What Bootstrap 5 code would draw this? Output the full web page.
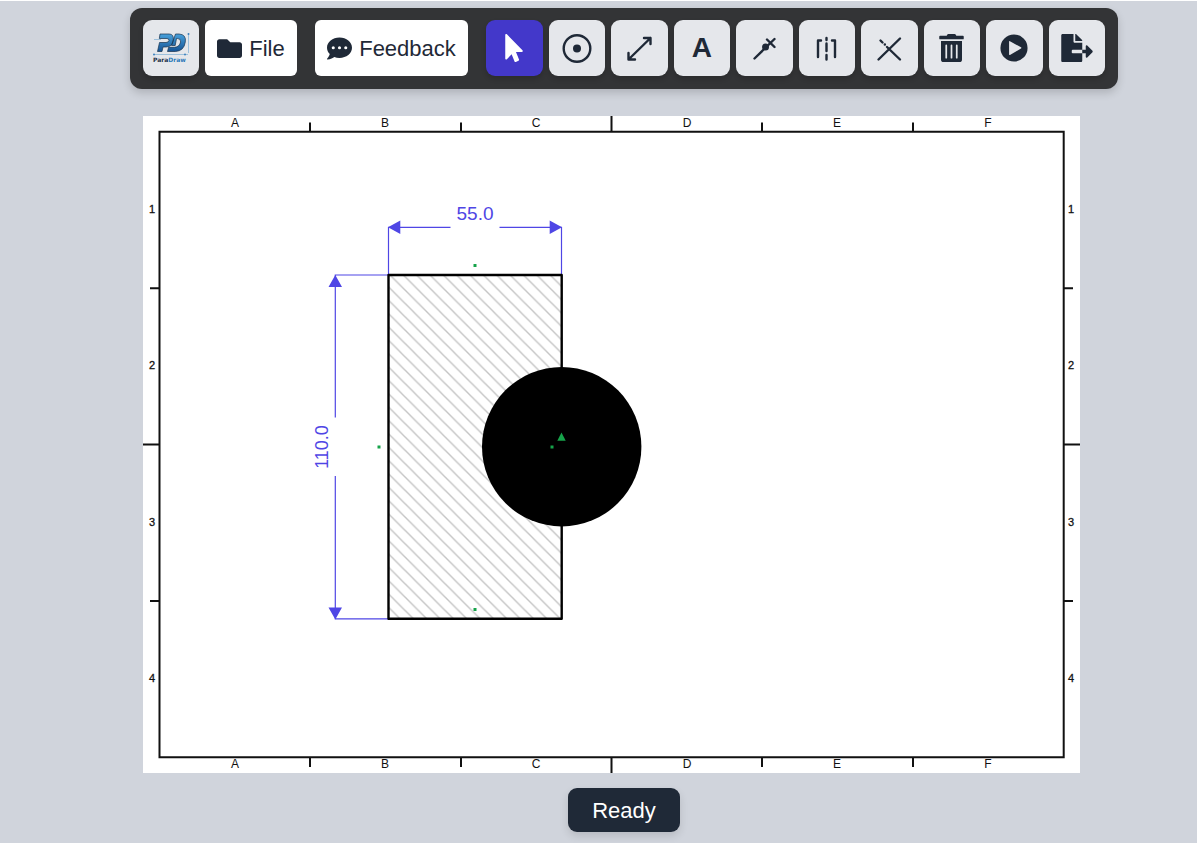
<!DOCTYPE html>
<html lang="en">
<head>
<meta charset="utf-8">
<meta name="viewport" content="width=device-width, initial-scale=1">
<title>ParaDraw</title>
<link href="https://cdn.jsdelivr.net/npm/bootstrap@5.3.0/dist/css/bootstrap.min.css" rel="stylesheet">
<style>
  body { background: #d0d4dc; font-family: "Liberation Sans", Arial, sans-serif; font-size: 22px; color: #1f2937; border-top: 1px solid #fff; }
  .workspace { padding: 7px 0 0 51px; min-height: calc(100vh - 1px); }
  .toolbar { width: 988px; max-width: 100%; background: #333436; border-radius: 12px; padding: 12px 13px 13px; gap: 18px; box-shadow: 0 4px 8px rgba(0,0,0,.16); }
  .toolset { gap: 6px; }
  .toolbar .btn { height: 56px; padding: 0; color: #1f2937; border: 0; }
  .toolbar .tool { flex: 1 1 0; min-width: 0; background: #e5e7eb; border-radius: 9px; box-shadow: 0 3px 5px rgba(0,0,0,.16); }
  .toolbar .logo { flex: 0 0 56px; }
  .toolbar .tool.active { background: #4338ca; color: #fff; }
  .toolbar .menu { background: #fff; border-radius: 6px; font-size: 22px; gap: 7px; }
  .menu-file { width: 92px; }
  .menu-feedback { width: 153px; }
  .tool-letter { font-size: 28px; font-weight: 700; line-height: 56px; }
  .glyph { fill: currentColor; display: block; flex: none; }
  .stroke { fill: none; stroke: currentColor; stroke-width: 2.400; stroke-linecap: round; stroke-linejoin: round; display: block; flex: none; }
  .sheet-area { padding: 27px 117px 15px 92px; }
  .sheet { display: block; width: 100%; height: auto; background: #fff; }
  .sheet text { font-size: 12px; text-anchor: middle; fill: #111; }
  .sheet .row-mark text { font-size: 11px; stroke: #111; stroke-width: .3; }
  .sheet .dim-text { font-size: 19px; fill: #4f46e5; }
  .sheet .dim-side { font-size: 18px; }
  .status { background: #1f2937; color: #fff; border-radius: 9px; padding: 1px 24px 0; line-height: 43px; box-shadow: 0 4px 8px rgba(0,0,0,.12); }
</style>
</head>
<body>
<main class="workspace d-flex flex-column align-items-center">
  <nav class="toolbar d-flex" aria-label="Tools">
    <div class="toolset d-flex">
      <button type="button" class="btn tool logo d-flex align-items-center justify-content-center" aria-label="ParaDraw">
        <svg width="56" height="56" viewBox="0 0 56 56">
          <defs><linearGradient id="blue" x1="0" y1="0" x2="0" y2="1"><stop offset="0" stop-color="#49a2dc"/><stop offset="1" stop-color="#155394"/></linearGradient></defs>
          <g stroke="#6ca6d0" stroke-width="1" fill="none"><path d="M11 34.500H45M45.500 13V33M11 19.500H18" opacity=".6"/></g>
          <g fill="#3f82bd"><circle cx="11" cy="34.500" r="1"/><circle cx="42" cy="34.500" r="1"/><circle cx="45.500" cy="14" r="1"/></g>
          <path fill-rule="evenodd" fill="url(#blue)" stroke="#17324e" stroke-width=".7" d="M17 14H26Q31 14 30.300 20Q29.500 27 23 27H20L19 31.500H14.500L16.500 22.500H23Q25.500 22.500 26 20.500Q26 18.500 24 18.500H16.300ZM32.500 14H36Q43.500 14.500 42.300 22Q41 31 32.500 31.500H24.500L25.600 27.300H31.500Q36.500 27 37.600 22Q38 18.500 34.500 18.500H33.500L32.200 25.500H28.500Z"/>
          <text x="10" y="42" font-family="DejaVu Sans" font-size="6" font-weight="700" fill="#1b2e45">Para<tspan fill="#2878b8">Draw</tspan></text>
        </svg>
      </button>
      <button type="button" class="btn menu menu-file d-flex align-items-center justify-content-center">
        <svg class="glyph" width="25" height="25" viewBox="0 0 512 512"><path d="M464 128H272l-64-64H48C21.490 64 0 85.490 0 112v288c0 26.510 21.490 48 48 48h416c26.510 0 48-21.490 48-48V176c0-26.510-21.490-48-48-48z"/></svg>
        <span>File</span>
      </button>
    </div>
    <button type="button" class="btn menu menu-feedback d-flex align-items-center justify-content-center">
      <svg class="glyph" width="25" height="25" viewBox="0 0 512 512"><path fill-rule="evenodd" d="M256 32C114.600 32 0 125.100 0 240c0 49.600 21.400 95 57 130.700C44.500 421.100 2.700 466 2.200 466.500c-2.200 2.300-2.800 5.700-1.500 8.700S4.800 480 8 480c66.300 0 116-31.800 140.600-51.400 32.700 12.300 69 19.400 107.400 19.400 141.400 0 256-93.100 256-208S397.400 32 256 32zM128 272a32 32 0 1 1 0-64 32 32 0 0 1 0 64zm128 0a32 32 0 1 1 0-64 32 32 0 0 1 0 64zm128 0a32 32 0 1 1 0-64 32 32 0 0 1 0 64z"/></svg>
      <span>Feedback</span>
    </button>
    <div class="toolset d-flex flex-grow-1">
      <button type="button" class="btn tool active d-flex align-items-center justify-content-center" aria-label="Select">
        <svg class="glyph" width="18" height="28" viewBox="0 0 320 512"><path d="M302.189 329.126H196.105l55.831 135.993c3.889 9.428-.555 19.999-9.444 23.999l-49.165 21.427c-9.165 4-19.443-.571-23.332-9.714l-53.053-129.136-86.664 89.138C18.729 472.710 0 463.554 0 447.977V18.299C0 1.899 19.921-6.096 30.277 5.443l284.412 292.542c11.472 11.179 3.007 31.141-12.500 31.141z"/></svg>
      </button>
      <button type="button" class="btn tool d-flex align-items-center justify-content-center" aria-label="Circle">
        <svg class="stroke" width="56" height="56" viewBox="0 0 56 56"><circle cx="28" cy="28.500" r="13.300"/><circle cx="28" cy="28.500" r="4" fill="currentColor" stroke="none"/></svg>
      </button>
      <button type="button" class="btn tool d-flex align-items-center justify-content-center" aria-label="Dimension">
        <svg class="stroke" width="56" height="56" viewBox="0 0 56 56"><path d="M17.500 39.500 39.500 18M33 18H39.500V24M17.500 33V39.500H24"/></svg>
      </button>
      <button type="button" class="btn tool" aria-label="Text"><span class="tool-letter">A</span></button>
      <button type="button" class="btn tool d-flex align-items-center justify-content-center" aria-label="Extend">
        <svg class="stroke" width="56" height="56" viewBox="0 0 56 56"><path d="M18.500 38.500 38.500 19M31 19.500 38.500 27"/><circle cx="29.500" cy="27" r="3.500" fill="currentColor" stroke="none"/></svg>
      </button>
      <button type="button" class="btn tool d-flex align-items-center justify-content-center" aria-label="Mirror">
        <svg class="stroke" width="56" height="56" viewBox="0 0 56 56"><path d="M22 20.500H19V37M33 20.500H36V37M27.500 18V20M27.500 23.500V31M27.500 35V39.500"/></svg>
      </button>
      <button type="button" class="btn tool d-flex align-items-center justify-content-center" aria-label="Trim">
        <svg class="stroke" width="56" height="56" viewBox="0 0 56 56"><path d="M17.500 39.500 39 18.500M19.500 20.500 21.500 22.500M23.800 24.500H23.900M26 27 39 39.500"/></svg>
      </button>
      <button type="button" class="btn tool d-flex align-items-center justify-content-center" aria-label="Delete">
        <svg class="glyph" width="25" height="28" viewBox="0 0 448 512"><path fill-rule="evenodd" d="M32 464a48 48 0 0 0 48 48h288a48 48 0 0 0 48-48V128H32zm272-256a16 16 0 0 1 32 0v224a16 16 0 0 1-32 0zm-96 0a16 16 0 0 1 32 0v224a16 16 0 0 1-32 0zm-96 0a16 16 0 0 1 32 0v224a16 16 0 0 1-32 0zM432 32H312l-9.400-18.700A24 24 0 0 0 281.100 0H166.800a23.720 23.720 0 0 0-21.400 13.300L136 32H16A16 16 0 0 0 0 48v32a16 16 0 0 0 16 16h416a16 16 0 0 0 16-16V48a16 16 0 0 0-16-16z"/></svg>
      </button>
      <button type="button" class="btn tool d-flex align-items-center justify-content-center" aria-label="Play">
        <svg class="glyph" width="28" height="28" viewBox="0 0 512 512"><path fill-rule="evenodd" d="M256 8a248 248 0 1 0 0 496 248 248 0 0 0 0-496zM166 142Q166 124 182 132L384 243Q398 254 384 266L182 382Q166 390 166 372Z"/></svg>
      </button>
      <button type="button" class="btn tool d-flex align-items-center justify-content-center" aria-label="Export">
        <svg class="glyph" width="32" height="28" viewBox="0 0 576 512"><path d="M384 121.900c0-6.300-2.500-12.400-7-16.900L279.100 7c-4.500-4.500-10.600-7-17-7H256v128h128zM571 308l-95.700-96.400c-10.100-10.100-27.400-3-27.400 11.300V288h-64v64h64v65.200c0 14.300 17.300 21.400 27.400 11.300L571 332c6.600-6.600 6.600-17.400 0-24zm-379 28v-32c0-8.800 7.200-16 16-16h176V160H248c-13.200 0-24-10.800-24-24V0H24C10.700 0 0 10.700 0 24v464c0 13.300 10.700 24 24 24h336c13.300 0 24-10.700 24-24V352H208c-8.800 0-16-7.200-16-16z"/></svg>
      </button>
    </div>
  </nav>

  <section class="sheet-area w-100">
    <svg class="sheet" viewBox="143 116 937 657" role="img" aria-label="Drawing sheet">
      <defs>
        <pattern id="hatch" patternUnits="userSpaceOnUse" x="391.700" y="276.700" width="13.350" height="13.350">
          <path d="M-1-1 14.350 14.350M-1 12.350 1 14.350M12.350-1 14.350 1" stroke="#c4c4c4" stroke-width="1.400"/>
        </pattern>
      </defs>
      <!-- frame and zone marks -->
      <g fill="none" stroke="#111" stroke-width="2">
        <path d="M159.500 131.700H1063.700V757.300H159.500Z"/>
        <path d="M310 122.500V132M461 122.500V132M611.500 116V132M762 122.500V132M913 122.500V132"/>
        <path d="M310 757V767M461 757V767M611.500 757V773M762 757V767M913 757V767"/>
        <path d="M150 288.300H159M143 444.500H159M150 601H159M1064 288.300H1073M1064 444.500H1080M1064 601H1073"/>
      </g>
      <g>
        <text x="235" y="127">A</text><text x="385" y="127">B</text><text x="536" y="127">C</text><text x="687" y="127">D</text><text x="837" y="127">E</text><text x="988" y="127">F</text>
        <text x="235" y="768">A</text><text x="385" y="768">B</text><text x="536" y="768">C</text><text x="687" y="768">D</text><text x="837" y="768">E</text><text x="988" y="768">F</text>
      </g>
      <g class="row-mark">
        <text x="152" y="213">1</text><text x="152" y="369">2</text><text x="152" y="526">3</text><text x="152" y="682">4</text>
        <text x="1071" y="213">1</text><text x="1071" y="369">2</text><text x="1071" y="526">3</text><text x="1071" y="682">4</text>
      </g>
      <!-- dimensions -->
      <g fill="none" stroke="#4f46e5" stroke-width="1.200">
        <path d="M388.500 275V227.300H450.500M499.500 227.300H561.500V275M388 275H335.300V417.500M335.300 476V618.800H388"/>
      </g>
      <g fill="#4f46e5">
        <path d="M388 227.300 400.300 220.500V234ZM562 227.300 549.700 220.500V234ZM335.300 275 328.500 287H342ZM335.300 619.500 328.500 607.500H342Z"/>
      </g>
      <text class="dim-text" x="475" y="220">55.0</text>
      <text class="dim-text dim-side" transform="translate(328 447) rotate(-90)">110.0</text>
      <!-- hatched body and disc -->
      <rect x="388.500" y="275" width="173.200" height="343.800" fill="url(#hatch)" stroke="#000" stroke-width="2.400" stroke-linejoin="round"/>
      <circle cx="561.700" cy="446.700" r="79.700"/>
      <g fill="#16a34a">
        <path d="M561.500 432.500 565.700 440.700H557.300Z"/>
        <path d="M550.500 445.500h3v3h-3zM473.500 264h3v3h-3zM473.500 608h3v3h-3zM377.500 445.500h3v3h-3z"/>
      </g>
    </svg>
  </section>
  <div class="status" role="status">Ready</div>
</main>
<script src="https://cdn.jsdelivr.net/npm/bootstrap@5.3.0/dist/js/bootstrap.bundle.min.js"></script>
</body>
</html>
